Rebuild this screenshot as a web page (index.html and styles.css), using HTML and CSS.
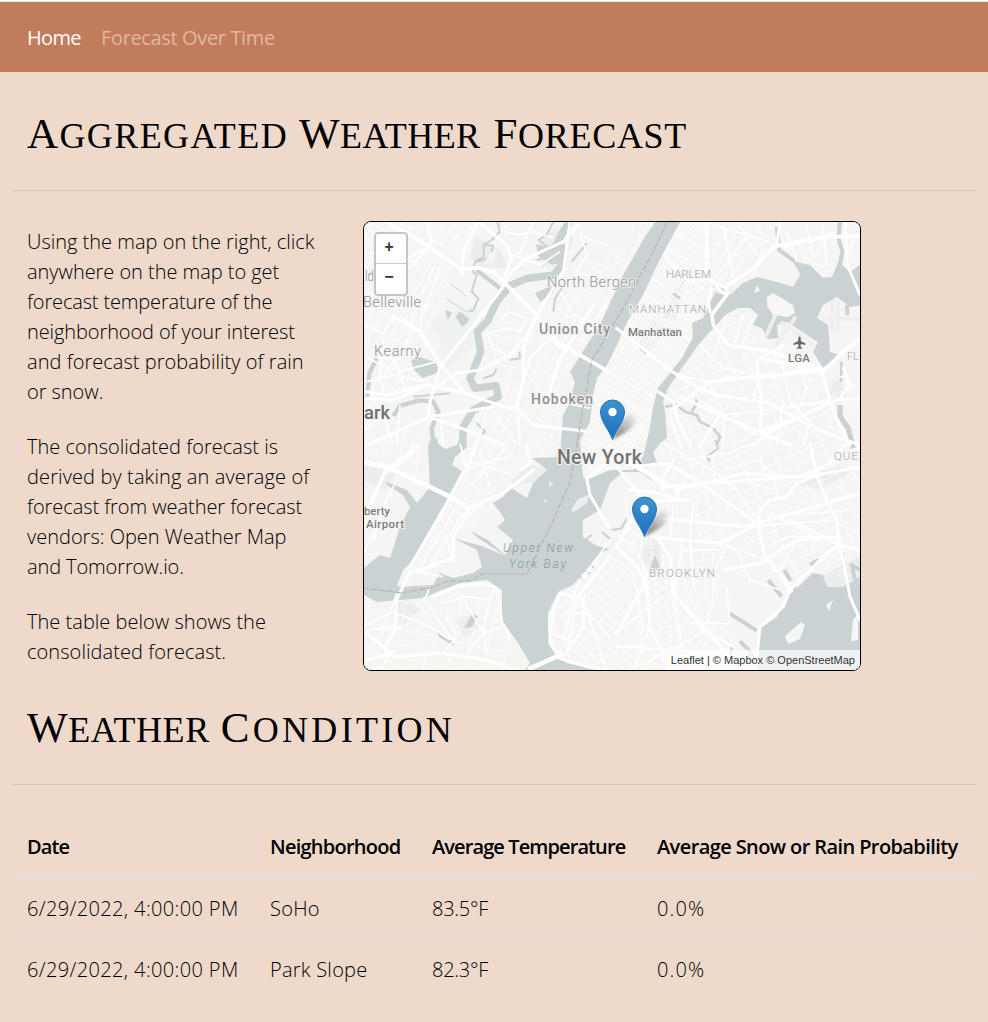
FILE: index.html
```html
<!DOCTYPE html>
<html lang="en">
<head>
<meta charset="utf-8">
<title>Aggregated Weather Forecast</title>
<link rel="stylesheet" href="styles.css">
</head>
<body>
<nav class="navbar"><a class="nav-home">Home</a><a class="nav-link">Forecast Over Time</a></nav>
<main class="page">
<h1 class="title title-main"><span class="t1">Aggregated</span> <span class="t2">Weather</span> <span class="t3">Forecast</span></h1>
<section class="overview">
<div class="intro">
<p><span class="l1">Using the map on the right, click</span> <span class="l2">anywhere on the map to get</span> <span class="l3">forecast temperature of the</span> <span class="l4">neighborhood of your interest</span> <span class="l5">and forecast probability of rain</span> <span class="l6">or snow.</span></p>
<p><span class="l7">The consolidated forecast is</span> <span class="l8">derived by taking an average of</span> <span class="l9">forecast from weather forecast</span> <span class="l10">vendors: Open Weather Map</span> <span class="l11">and Tomorrow.io.</span></p>
<p><span class="l12">The table below shows the</span> <span class="l13">consolidated forecast.</span></p>
</div>
<div class="map">
<svg class="tiles" viewBox="364 222 496 448" width="496" height="448">
<defs>
<pattern id="manh" width="3.6" height="17" patternUnits="userSpaceOnUse" patternTransform="rotate(30)"><path d="M0 0V17M0 0H4" stroke="#fff" stroke-width="1.9" fill="none"/></pattern>
<pattern id="sw" width="13" height="8" patternUnits="userSpaceOnUse" patternTransform="rotate(40)"><path d="M0 0V8M0 0H13" stroke="#fff" stroke-width="1.2" fill="none"/></pattern>
<pattern id="ns" width="10" height="21" patternUnits="userSpaceOnUse" patternTransform="rotate(-6)"><path d="M0 0V21M0 0H10" stroke="#fff" stroke-width="1.2" fill="none"/></pattern>
<pattern id="jc" width="9" height="15" patternUnits="userSpaceOnUse" patternTransform="rotate(29)"><path d="M0 0V15M0 0H9" stroke="#fff" stroke-width="1.2" fill="none"/></pattern>
<pattern id="qn" width="16" height="12" patternUnits="userSpaceOnUse" patternTransform="rotate(-26)"><path d="M0 0V12M0 0H16" stroke="#fff" stroke-width="1.1" fill="none"/></pattern>
<pattern id="si" width="18" height="14" patternUnits="userSpaceOnUse" patternTransform="rotate(12)"><path d="M0 0V14M0 0H18" stroke="#fff" stroke-width="1.1" fill="none"/></pattern>
<linearGradient id="pin" x1="0" y1="0" x2="0" y2="1"><stop offset="0" stop-color="#3e93cf"/><stop offset="1" stop-color="#1b6fc3"/></linearGradient>
<linearGradient id="shade" x1="0" y1="1" x2="1" y2="0"><stop offset="0" stop-color="#222" stop-opacity=".65"/><stop offset="1" stop-color="#444" stop-opacity="0"/></linearGradient>
<filter id="soft" x="-50%" y="-50%" width="200%" height="200%"><feGaussianBlur stdDeviation="1.6"/></filter>
<g id="marker">
<path d="M0 0L9-18Q20-31 24-23Q25-15 13-7Z" fill="url(#shade)" filter="url(#soft)"/>
<path d="M0 0C-3-9-12-18-12-27.500A12 12 0 0 1 12-27.500C12-18 3-9 0 0Z" fill="url(#pin)" stroke="#2a73ad" stroke-width="1"/><circle cy="-27.500" r="4.200" fill="#fff"/>
</g>
</defs>
<rect x="364" y="222" width="496" height="448" fill="#f5f5f4"/>
<!-- parks and marshland -->
<g fill="#eceeed">
<path d="M475 236L500 250 508 268 480 268 470 258ZM540 238L570 222 573 240 566 258 541 268ZM364 466L380 468 395 474 386 490 364 480ZM527 462L548 471 533 483 510 484ZM663 318L675 288 686 277 676 320ZM640 340L654 316 668 325 650 350 635 352ZM638 558L650 536 662 545 661 565 652 570ZM800 484L812 474 842 466 848 474 820 490ZM823 575L860 555 860 577 843 587 827 587ZM825 385L840 375 846 395 836 404ZM715 288L733 284 728 310 706 316ZM390 605L405 598 420 610 402 625ZM455 620L473 612 480 625 465 638Z"/>
<path fill="#f0f1f1" d="M430 320L470 306 485 320 470 350 445 370 440 340Z"/>
</g>
<!-- street grids -->
<path fill="url(#jc)" d="M364 222H480L440 300 410 370 364 430ZM475 400L560 370 560 440 530 470 463 475ZM548 300L600 260 655 222 610 300 570 372 530 390ZM463 470L500 500 440 560 405 570Z"/>
<path fill="url(#si)" d="M364 600H500L520 670H364ZM364 430H428V480L364 465ZM610 222H680L650 240ZM480 345L530 300 520 380 500 400Z"/>
<path fill="url(#manh)" d="M680 222L710 222 710 270 700 318 692 325 690 345 655 390 646 440 610 470 587 478 590 422 597 378 643 295Z"/>
<path fill="url(#jc)" d="M710 222H775L750 255 715 293ZM775 240H840L830 275 800 262Z"/>
<path fill="url(#qn)" d="M705 335L750 310 770 340 820 355 825 372 860 380V560L790 590 735 550 700 545 665 430 670 390Z"/>
<path fill="url(#ns)" d="M655 450L700 420 735 520 700 670H635L625 500Z"/>
<path fill="url(#sw)" d="M557 597L645 520 640 570 690 590 740 640 735 670H570Z"/>
<!-- rivers, bays and creeks -->
<g fill="#cad2d3">
<path d="M655 222L643 240 633 258 623 275 610 303 600 325 587 345 570 372 575 382 570 402 563 415 560 457 532 458 547 470 533 483 527 498 510 487 503 497 493 503 500 512 505 520 497 527 513 540 505 555 488 540 470 531 477 537 505 556 482 546 455 539 477 550 482 567 473 573 453 578 440 573 433 585 400 587 397 585 403 570 417 557 427 540 440 517 448 498 460 480 463 472 452 465 455 457 467 447 466 438 460 438 457 445 445 449 438 444 437 438 431 438 428 445 430 487 417 503 407 490 387 482 387 485 403 495 410 507 400 527 390 558 380 555 364 568V595L377 602 423 598 437 592 460 583 487 580 502 590 502 620 518 643 530 663 525 670H600L566 663 557 653 548 633 548 613 558 592 573 585 600 553 610 549 597 546 583 537 583 520 600 510 610 483 623 472 640 472 653 481 645 465 657 462 653 453 660 443 667 438 665 412 663 402 668 388 682 368 698 345 710 332 725 315 738 308 750 308 758 315 753 325 762 328 768 339 778 338 777 325 787 322 818 342 813 352 823 368 840 355 830 352 828 325 817 318 823 305 837 297 850 307 860 305V265L850 272 842 265 840 258 832 277 823 278 810 265 797 262 800 275 793 287 777 282 757 277 743 283 730 295 715 293 703 318 692 323 693 337 682 358 658 388 653 408 650 428 643 457 633 470 610 470 587 480 583 477 580 440 590 422 593 395 597 378 607 365 617 345 627 322 643 295 657 265 673 235 680 222Z"/>
<path d="M758 630L777 617 787 597 813 573 823 575 827 587 843 587 860 577V670H758ZM411 360L420 357 435 362 440 372 423 378 414 370ZM445 310L452 312 448 320ZM457 319L462 313 468 322 462 327ZM464 628L472 614 478 616 472 627ZM436 630L452 641 454 646 439 637ZM650 567L655 555 660 566 657 570ZM536 244L548 247 560 238 566 248 563 262 552 265 538 256ZM535 293L551 286 554 292 540 302Z"/>
</g>
<g fill="none" stroke="#cad2d3" stroke-linejoin="round">
<g transform="translate(360 215) scale(.33333)" stroke-width="22">
<path d="M630 20L606 55 592 85M602 90L607 145 582 180 500 190 450 212 410 260 383 318 352 350 362 410 342 460 330 490 345 520 408 512 415 545 340 585 310 635 307 700"/>
<path stroke-width="13" d="M100 603L120 572 180 556 220 560 235 590 215 640 222 700M22 550L28 475 50 430M350 165L420 220"/>
<path stroke-width="6" d="M412 20L420 50 395 75 370 90 372 125 345 140 338 170 350 180 335 230 355 250 340 285 325 290M370 90L400 92 390 130 350 140M680 85L660 110 635 140M580 290L585 250 605 220M450 435L480 430 478 410M370 490L400 480 410 460M160 545L270 535M350 625L375 650 365 660M580 20L560 60 535 75 575 105 565 125 530 135"/>
<path stroke-width="3" d="M258 250L318 290M270 205L320 245"/><path d="M292 298L322 320"/>
</g>
<g transform="translate(610 215) scale(.33333)">
<path stroke-width="12" d="M690 20L685 70 697 110 688 160M500 35L508 105 555 140 575 170M710 270L713 300"/>
<path stroke-width="8" d="M165 575L200 570 225 590 260 600 270 620 300 635M310 640L330 665 320 690M260 550L258 570 245 590M695 440L693 500M305 215L320 210 345 225M190 235L210 250M90 400L110 415"/>
<path stroke-width="16" d="M690 570L690 605 715 640 730 700"/>
</g>
<g transform="translate(610 440) scale(.33333)">
<path stroke-width="12" d="M358 520L440 572M390 603L420 635 430 670M475 420L515 470M523 390L542 422M550 435L570 480M600 375L625 360M750 390L725 375 735 420"/>
<path stroke-width="6" d="M315 0L325 25 290 50 300 65M5 270L35 265 50 235M365 620L360 660M700 340L698 380"/>
</g>
<path stroke-width="2" d="M503 500L509 510M507 496L513 505M585 540L592 535M602 532L610 539M578 566L590 574M586 560L594 568M577 574L583 580"/>
</g>
<g fill="#f6f6f5">
<path d="M767 297L773 293 793 305 795 313 788 317 773 315 767 306ZM757 285L760 291 754 293ZM826 605L833 600 829 611ZM785 636L801 622 805 625 800 639 788 644ZM853 620L858 614V640L851 641ZM490 253L497 249 494 262 484 265Z"/>
<path fill="#eceeed" d="M571 510L578 499 590 494 587 503 574 512ZM543 500L547 500 546 503ZM549 481L554 484 549 486Z"/>
</g>
<!-- local streets -->
<g fill="none" stroke="#fff" stroke-width="1.600">
<g transform="translate(360 215) scale(.33333)" stroke-width="5">
<path d="M20 40L80 80 150 140M30 110L100 150 200 100M85 20L130 90 55 170M225 150L170 270 140 380 60 500M240 160L185 300 180 350M10 330L70 355 100 310 20 260M130 310L180 350 200 400M20 430L120 470 230 440M70 360L60 490 75 540M55 430L100 430 140 530M380 350L400 400 440 420M370 360L440 340 480 350 500 310M500 310L445 290 420 320M520 20L480 110 450 140M420 45L470 60 520 50 580 70M460 120L540 150 600 110M600 230L640 300 700 320 745 260M640 170L745 200M680 70L745 90M660 50L680 120 640 190M540 350L580 380 620 410M470 560L480 690M500 540L600 560 690 580M380 590L350 690M400 590L470 690M240 620L250 690M120 570L110 690M20 500L100 480 200 500M10 650L70 600 100 690"/>
</g>
<g transform="translate(610 215) scale(.33333)" stroke-width="5">
<path d="M310 30L480 80M330 170L420 50M370 190L340 30M390 30L440 120M460 100L430 180M520 100L610 70 680 50M530 50L560 140M590 30L610 130M640 30L650 150M730 70L720 110M270 390L340 460 440 480M350 310L310 420M400 300L370 400M430 310L390 400M200 480L300 500 450 480 640 470M300 510L340 600 340 690M260 550L420 650 550 690M450 490L430 540 460 600M490 420L520 460 540 560 600 620M560 430L590 520 560 600M180 600L210 690M340 600L520 580 660 560M520 560L500 690M600 620L580 690M540 570L750 550M680 490L710 480 730 520"/>
</g>
<g transform="translate(360 440) scale(.33333)" stroke-width="5">
<path d="M80 100L160 40 180 10M80 90L20 220M10 340L80 200M40 310L60 220M110 120L70 200M320 90L300 10M330 80L450 50M350 120L440 20M360 40L390 140M320 60L440 100M170 400L290 200M190 410L310 220M140 390L250 220M170 395L250 410M260 300L280 360 220 370M10 560L90 520 110 460M110 520L210 560 270 600M190 470L240 550 280 600M210 440L190 490M240 490L320 470 390 480M300 460L370 580 320 640M370 580L430 560M400 450L370 560 380 640M430 550L450 600M250 640L290 590 260 530M20 570L120 560M100 630L60 690M200 640L190 690"/>
<path d="M600 460L650 480 620 640 590 650 570 590 590 480M610 520L680 520M575 580L650 610M750 300L650 440 610 600M650 480L750 590M680 510L740 690"/>
</g>
<g transform="translate(610 440) scale(.33333)" stroke-width="5">
<path d="M160 10L320 100 380 150 450 250M220 60L350 40 430 10M340 90L440 60 490 100 500 160M400 90L420 130 500 150M450 40L460 90M20 280L80 330 110 400M180 450L280 570 370 620M290 560L260 590 60 690M400 270L360 300 310 400 310 480 290 550M330 310L420 340 480 370M240 550L360 550 350 440M380 330L420 420 510 450M440 250L460 340 540 450M480 220L560 260 640 310M560 300L510 390M620 300L600 340M490 310L540 290 650 290M470 230L730 210M400 260L690 240M200 330L330 330M220 300L190 480 210 610M190 200L180 300M250 180L240 310 250 440M20 620L200 630M110 430L120 560 70 690M80 440L100 570M10 580L160 470"/>
</g>
</g>
<!-- highways and bridges -->
<g fill="none" stroke="#fff" stroke-linecap="round" stroke-linejoin="round">
<g transform="translate(360 215) scale(.33333)" stroke-width="9">
<path stroke-width="11" d="M80 20L200 90 305 165 350 158 400 170 430 200 520 290 530 305 590 380 720 455 745 470"/>
<path d="M355 20L310 110 305 180M355 20L440 90 455 130 430 195M430 215L350 320 240 455 210 560 205 610M200 20L215 80 160 150M655 30L610 80 500 130 460 165 430 205M630 20L610 170 530 300 500 360 450 420 360 465 290 475 225 520M20 530L80 540 200 510 300 530 430 575 470 580 520 630 690 650M205 605L310 590 400 575M200 610L20 690M205 605L360 660 430 690M530 300L490 400 490 500 470 575M100 305L180 350 240 445 310 530M20 550L100 555 190 515M560 380L510 430 470 560M700 270L600 430 560 560"/>
</g>
<g transform="translate(610 215) scale(.33333)" stroke-width="9">
<path stroke-width="11" d="M290 20L290 190 350 220 350 240 305 300 310 330 355 390 480 410 640 465 670 440 700 410 750 370M355 210L430 160 490 95 650 65 750 65"/>
<path d="M285 190L240 200 170 130M305 215L295 260 300 290M305 200L340 235M480 410L440 440 455 560 450 650 560 610 690 550 720 510 700 460M640 465L450 430 490 410 520 390M635 470L670 590 720 690M640 465L300 500 260 530 180 590M170 460L260 515 320 540 480 565 560 610 640 650 750 690M145 530L190 560 200 610 240 690M210 545L330 600 450 650 540 690M705 20L712 150 750 240M560 610L480 650 430 690M510 20L500 90M640 465L580 460 500 485 340 490M330 600L270 690M20 340L180 465"/>
</g>
<g transform="translate(360 440) scale(.33333)" stroke-width="9">
<path stroke-width="14" d="M10 65L80 80 270 170 325 205M510 685L590 650 600 638"/>
<path d="M80 80L20 220M160 10L150 40 80 90M325 205L310 245 280 290 280 350 200 385 150 395 110 480 105 570 75 620 100 650 240 640 350 655 400 665 460 690M20 580L75 625 80 645 20 660M325 205L430 160 520 90M370 180L330 225 300 230M310 95L260 190 150 380M320 90L350 10M500 15L510 70 480 90M220 470L290 440 370 430 410 445 425 540M680 115L690 165 745 260M680 115L745 70M600 460L570 540 570 610 600 655 680 680 740 690M600 460L670 475 670 560 620 640M650 475L750 350"/>
</g>
<g transform="translate(610 440) scale(.33333)" stroke-width="9">
<path d="M20 80L70 140 100 180M70 80L170 70 260 120 400 220 445 255M60 70L170 140 620 105 750 80M190 60L160 110 155 150M0 20L200 150 210 180M200 150L400 100 570 110 650 75 750 20M600 10L620 105 650 180 680 240 688 310M710 10L650 75M100 180L20 320M150 235L400 260 445 250 750 160M130 290L220 300 330 310 445 250M445 250L450 210 480 180 530 170 560 130 620 105M445 255L465 350 540 440M540 240L690 315 750 330M690 315L650 340 540 450 520 500 450 560 440 660M690 315L720 470 750 540M20 320L80 380 110 430 120 560 180 690M140 290L180 350 190 460 290 570 390 690M340 390L450 370 560 300 690 290M110 400L105 430 20 580M60 150L150 160 200 180M90 185L230 180M20 620L90 620"/>
</g>
<!-- airport runways -->
<g stroke="#eeefee" stroke-width="4"><path d="M782 323L812 344M776 345L795 318M767 334L775 316M832 302V330M838 301V330M824 319H858"/></g>
</g>
<g fill="none" stroke="#b7b4b4" stroke-width="1.200" stroke-dasharray="6 2"><path d="M667 222L655 248 625 305 592 360 584 402 576 450 570 482 551 525 527 574H482L470 581H448L430 588 402 593 364 588"/></g>
<!-- place names -->
<g class="places">
<g font-size="14.500" fill="#949494" stroke-width="1.500"><text x="547" y="287" textLength="89">North Bergen</text><text x="363" y="307" textLength="58">Belleville</text><text x="374" y="356" textLength="47">Kearny</text><text x="365" y="281" textLength="9" lengthAdjust="spacingAndGlyphs">ld</text></g>
<g font-size="14" font-weight="500" fill="#909090"><text x="539" y="334" textLength="71">Union City</text><text x="531" y="404" textLength="62">Hoboken</text></g>
<g font-size="11.500" fill="#a9a9a9"><text x="666" y="278" textLength="45">HARLEM</text><text x="629" y="313" textLength="77">MANHATTAN</text><text x="649" y="577" textLength="66">BROOKLYN</text><text x="834" y="460" textLength="24">QUE</text><text x="847" y="360" textLength="12">FL</text></g>
<g font-size="11.500" font-weight="500" fill="#7c7c7c"><text x="628" y="336" textLength="54">Manhattan</text><text x="788" y="362" textLength="22">LGA</text><text x="364" y="515" textLength="26">berty</text><text x="366" y="528" textLength="38">Airport</text></g>
<g font-size="19.500" font-weight="500" fill="#727272"><text x="557" y="464" textLength="85">New York</text></g><text x="364" y="419" textLength="26" lengthAdjust="spacingAndGlyphs" font-size="17.500" font-weight="500" fill="#707070">ark</text>
<g class="bay" font-size="12" font-style="italic" fill="#87979b"><text x="503" y="552" textLength="70">Upper New</text><text x="509" y="568" textLength="57">York Bay</text></g>
</g>
<path d="M799.500 336.500C800.800 336.500 800.800 338 800.800 341L805.500 343.500V345L800.800 344 800.500 346.700 802 348V349L799.500 348.400 797 349V348L798.500 346.700 798.200 344 793.500 345V343.500L798.200 341C798.200 338 798.200 336.500 799.500 336.500Z" fill="#666"/>
<use href="#marker" x="612.500" y="439.500"/><use href="#marker" x="644.500" y="536.500"/>
</svg>
<div class="zoom"><a>+</a><a>−</a></div>
<div class="credit">Leaflet | © Mapbox © OpenStreetMap</div>
</div>
</section>
<h2 class="title title-weather"><span class="t4">Weather</span> <span class="t5">Condition</span></h2>
<table class="forecast">
<thead><tr><th class="c1">Date</th><th class="c2">Neighborhood</th><th class="c3">Average Temperature</th><th class="c4">Average Snow or Rain Probability</th></tr></thead>
<tbody><tr><td class="date">6/29/2022, 4:00:00 PM</td><td class="area">SoHo</td><td class="temp">83.5°F</td><td class="prob">0.0%</td></tr><tr><td class="date">6/29/2022, 4:00:00 PM</td><td class="area">Park Slope</td><td class="temp">82.3°F</td><td class="prob">0.0%</td></tr></tbody>
</table>
</main>
</body>
</html>
```
FILE: styles.css
```css
* { box-sizing: border-box; }
body { margin: 0; border-top: 1px solid #fff; background: #eed9cb; color: #000; font: 300 20px/30px "Open Sans", "Noto Sans", sans-serif; }
.navbar { height: 71px; border-top: 1px solid #dee2e6; background: #c17c5b; display: flex; align-items: center; gap: 20px; padding: 1px 27px 0; font-weight: 400; letter-spacing: -.7px; white-space: nowrap; }
.nav-home { color: #fff; width: 54px; }
.nav-link { color: #dfb8a4; letter-spacing: -.36px; }
.page { padding: 0 12px; }
.title { margin: 0; height: 119px; border-bottom: 1px solid #d6c3b7; padding: 37px 15px 0; font: 400 36px/50px "Liberation Serif", serif; text-transform: uppercase; white-space: nowrap; }
.title span { display: inline-block; }
.title span::first-letter { font-size: 43px; }
.t1 { letter-spacing: 1.4px; margin-right: 2px; }
.t2 { letter-spacing: .4px; margin-right: 4px; }
.t3 { letter-spacing: .7px; }
.t4 { letter-spacing: .6px; margin-right: 2px; }
.t5 { letter-spacing: 3.3px; }
.overview { display: flex; padding: 30px 0 0 15px; }
.intro { width: 336px; padding-top: 6px; }
.intro p { margin: 0 0 25px; }
.intro p:last-child { margin: 0; }
.intro span { display: block; white-space: nowrap; }
.l2 { letter-spacing: -.04px; }
.l3 { letter-spacing: -.15px; }
.l4 { letter-spacing: -.1px; }
.l5 { letter-spacing: .04px; }
.l6 { letter-spacing: -.05px; }
.l7 { letter-spacing: .02px; }
.l8 { letter-spacing: .12px; }
.l9 { letter-spacing: -.07px; }
.l11 { letter-spacing: -.11px; }
.l12 { letter-spacing: .02px; }
.l13 { letter-spacing: .06px; }
.map { position: relative; width: 498px; height: 450px; flex: none; border: 1px solid #000; border-radius: 8px; overflow: hidden; }
.tiles { display: block; }
.places { font-family: Roboto, sans-serif; paint-order: stroke; stroke: #f6f6f5; stroke-width: 2px; stroke-linejoin: round; }
.bay { stroke: none; }
.zoom { position: absolute; left: 10px; top: 10px; width: 34px; border: 2px solid rgba(0, 0, 0, .2); border-radius: 4px; background: #fff; background-clip: padding-box; }
.zoom a { display: block; height: 30px; padding-right: 4px; font: bold 16px/28px "Liberation Mono", monospace; text-align: center; color: #333; }
.zoom a:first-child { border-bottom: 1px solid #ccc; }
.credit { position: absolute; right: 0; bottom: 0; height: 20px; padding: 0 5px; background: rgba(255, 255, 255, .7); color: #333; font: 400 11px/20px "Liberation Sans", sans-serif; white-space: nowrap; }
.title-weather { height: 114px; padding-top: 32px; }
.forecast { width: 964px; margin-top: 30px; border-spacing: 0; table-layout: fixed; }
.forecast th, .forecast td { padding: 16px 0 14px 15px; text-align: left; white-space: nowrap; }
.forecast th { border-top: 1px solid #e4dcd8; border-bottom: 2px solid #dee2e6; font-weight: 600; letter-spacing: -.9px; }
.forecast tr + tr td { border-top: 1px solid #dee2e6; }
.forecast .c1 { width: 243px; }
.forecast .c2 { width: 162px; letter-spacing: -.75px; }
.forecast .c3 { width: 225px; }
.forecast .c4 { letter-spacing: -.6px; }
.date { letter-spacing: .37px; }
.area { letter-spacing: .25px; }
.temp { letter-spacing: -.25px; }
.prob { letter-spacing: 1.1px; }
```
